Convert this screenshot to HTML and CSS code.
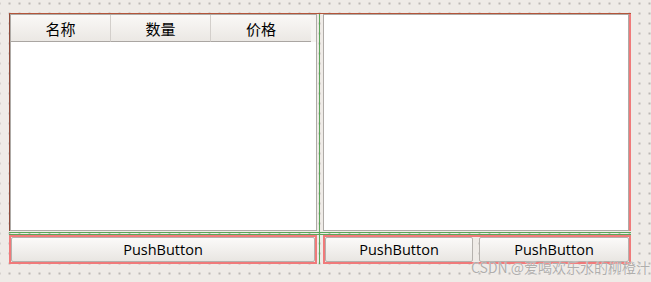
FILE: index.html
```html
<!DOCTYPE html>
<html lang="zh">
<head>
    <meta charset="UTF-8">
    <title>Form</title>
    <link rel="stylesheet" href="styles.css">
</head>
<body>
    <div class="form">
        <div class="topline"></div>
        <div class="left-cell">
            <div class="table">
                <div class="table-header">
                    <div class="section">名称</div>
                    <div class="section">数量</div>
                    <div class="section">价格</div>
                    <div class="filler"></div>
                </div>
                <div class="table-body"></div>
            </div>
        </div>
        <div class="right-cell">
            <div class="view"></div>
        </div>
        <div class="hsep"></div>
        <div class="splitter"></div>
        <div class="btn-box">
            <button class="btn">PushButton</button>
        </div>
        <div class="btn-box btn-box-right">
            <button class="btn btn-first">PushButton</button>
            <button class="btn btn-second">PushButton</button>
        </div>
    </div>
    <div class="watermark">CSDN @爱喝欢乐水的柳橙汁</div>
</body>
</html>
```

FILE: styles.css
```css
body {
    margin: 0;
    width: 651px;
    height: 282px;
    overflow: hidden;
    position: relative;
    background-color: #efebe7;
    background-image: radial-gradient(circle, #a29e9a 0.6px, transparent 0.9px);
    background-size: 10px 10px;
    background-position: 4.5px -1.5px;
    font-family: "Open Sans", "Noto Sans CJK SC", sans-serif;
}
.form {
    margin: 13px 0 0 9px;
    width: 622px;
    height: 251px;
    display: grid;
    grid-template-columns: 308px 6px 308px;
    grid-template-rows: 1px 217px 4px 29px;
}
.topline {
    grid-column: 1 / -1;
    background-color: #b4553a;
}
.left-cell {
    grid-column: 1;
    grid-row: 2;
    border-left: 1px solid #8e4a3a;
}
.table {
    height: 100%;
    box-sizing: border-box;
    border: 1px solid #aeaaa6;
    background-color: #fff;
    display: flex;
    flex-direction: column;
}
.table-header {
    display: flex;
    height: 27px;
    flex-shrink: 0;
}
.section {
    width: 100px;
    box-sizing: border-box;
    border-right: 1px solid #d3cfcb;
    border-bottom: 1px solid #aaa6a2;
    background: linear-gradient(#faf8f6, #ebe8e4);
    display: flex;
    align-items: center;
    justify-content: center;
    font-family: "Noto Sans CJK SC", sans-serif;
    font-size: 15px;
    color: #000;
}
.section:nth-child(3) {
    border-right: none;
}
.filler {
    flex: 1;
    background-color: #f6f4f2;
}
.table-body {
    flex: 1;
}
.right-cell {
    grid-column: 3;
    grid-row: 2;
    border-right: 2px solid #f07a7a;
}
.view {
    height: 100%;
    box-sizing: border-box;
    border: 1px solid #aeaaa6;
    background-color: #fff;
}
.hsep {
    grid-column: 1 / -1;
    grid-row: 3;
    background: linear-gradient(transparent 1px, #5aa65a 1px, #5aa65a 2px, transparent 2px, transparent 3px, #5aa65a 3px);
}
.splitter {
    grid-column: 2;
    grid-row: 2 / 5;
    background: linear-gradient(to right, transparent 2px, #5aa65a 2px, #5aa65a 3px, transparent 3px);
}
.btn-box {
    grid-row: 4;
    grid-column: 1;
    box-sizing: border-box;
    border: 2px solid #f07a7a;
    display: flex;
}
.btn-box-right {
    grid-column: 3;
    gap: 6px;
}
.btn {
    flex: 1;
    margin: 0;
    padding: 0;
    border: 1px solid #b5b1ad;
    border-radius: 2px;
    background: linear-gradient(#fbfaf9, #e9e6e2);
    font-family: "Open Sans", sans-serif;
    font-size: 14.5px;
    color: #000;
}
.btn-first {
    flex: 0 0 148px;
}
.btn-second {
    flex: 0 0 150px;
}
.watermark {
    position: absolute;
    left: 471px;
    top: 259px;
    white-space: nowrap;
    font-family: "Noto Sans CJK SC", sans-serif;
    font-size: 14px;
    line-height: 16px;
    color: #b0aeac;
    text-shadow: 0 0 1px #fff;
}
```
